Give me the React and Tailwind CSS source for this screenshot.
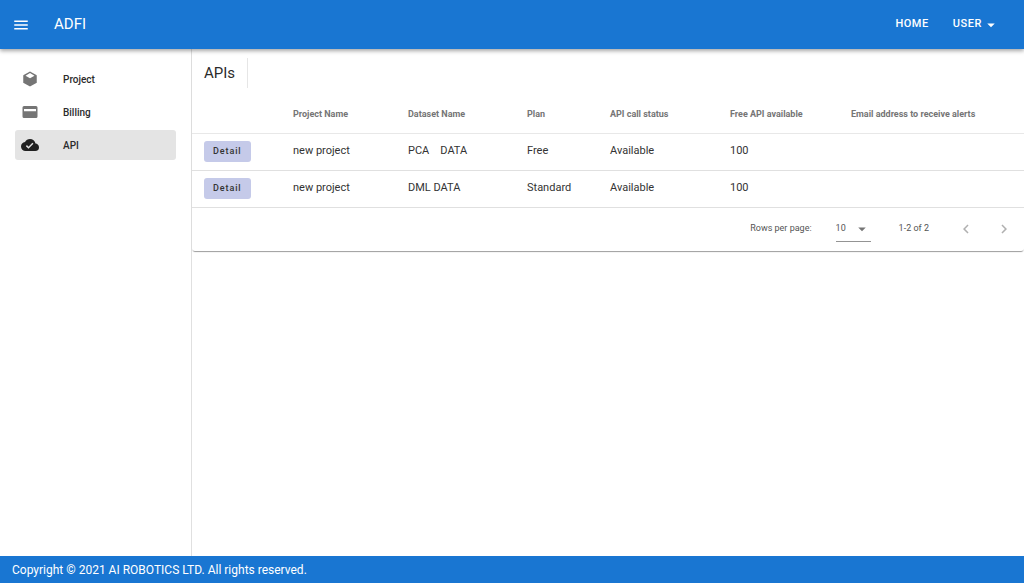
import { useState } from "react";
import clsx from "clsx";

const ICONS = {
   menu: "M3,6H21V8H3V6M3,11H21V13H3V11M3,16H21V18H3V16Z",
   cube: "M21,16.5C21,16.88 20.79,17.21 20.47,17.38L12.57,21.82C12.41,21.94 12.21,22 12,22C11.79,22 11.59,21.94 11.43,21.82L3.53,17.38C3.21,17.21 3,16.88 3,16.5V7.5C3,7.12 3.21,6.79 3.53,6.62L11.43,2.18C11.59,2.06 11.79,2 12,2C12.21,2 12.41,2.06 12.57,2.18L20.47,6.62C20.79,6.79 21,7.12 21,7.5V16.5M12,4.15L6.04,7.5L12,10.85L17.96,7.5L12,4.15Z",
   card: "M4,4H20A2,2 0 0,1 22,6V18A2,2 0 0,1 20,20H4A2,2 0 0,1 2,18V6A2,2 0 0,1 4,4M4,8V11H20V8H4Z",
   cloudCheck: "M10,17L6.5,13.5L7.91,12.08L10,14.17L15.18,9L16.59,10.41M19.35,10.03C18.67,6.59 15.64,4 12,4C9.11,4 6.6,5.64 5.35,8.03C2.34,8.36 0,10.9 0,14A6,6 0 0,0 6,20H19A5,5 0 0,0 24,15C24,12.36 21.95,10.22 19.35,10.03Z",
   menuDown: "M7,10L12,15L17,10H7Z",
   left: "M15.41,16.58L10.83,12L15.41,7.41L14,6L8,12L14,18L15.41,16.58Z",
   right: "M8.59,16.58L13.17,12L8.59,7.41L10,6L16,12L10,18L8.59,16.58Z",
};

const Icon = ({ name, className }) => (
   <svg viewBox="0 0 24 24" fill="currentColor" aria-hidden="true" className={clsx("shrink-0", className)}>
      <path d={ICONS[name]} />
   </svg>
);

const navItems = [
   { label: "Project", icon: "cube" },
   { label: "Billing", icon: "card" },
   { label: "API", icon: "cloudCheck" },
];

const columns = [
   { label: "", width: "w-[89px]" },
   { label: "Project Name", width: "w-[115px]" },
   { label: "Dataset Name", width: "w-[119px]" },
   { label: "Plan", width: "w-[83px]" },
   { label: "API call status", width: "w-[120px]" },
   { label: "Free API available", width: "w-[121px]" },
   { label: "Email address to receive alerts", width: "w-[185px]" },
];

const rows = [
   { project: "new project", dataset: "PCA\u3000DATA", plan: "Free", status: "Available", free: 100, email: "" },
   { project: "new project", dataset: "DML DATA", plan: "Standard", status: "Available", free: 100, email: "" },
];

const Header = () => (
   <header className="relative z-10 flex h-[49px] items-center bg-[#1976d2] pr-4 pl-3 text-white shadow-[0_2px_4px_rgba(0,0,0,0.35)]">
      <button type="button" aria-label="Menu">
         <Icon name="menu" className="size-[18px]" />
      </button>
      <div className="ml-6 text-[15px]">ADFI</div>
      <nav className="ml-auto flex items-center text-[11px] font-medium tracking-wider">
         <a href="#home" className="px-3">HOME</a>
         <button type="button" className="flex items-center pr-2 pl-3 tracking-wider">
            USER
            <Icon name="menuDown" className="size-[18px]" />
         </button>
      </nav>
   </header>
);

const Sidebar = ({ active, onSelect }) => (
   <aside className="w-48 shrink-0 border-r border-[#e0e0e0] px-[15px] pt-[15px]">
      <ul className="flex flex-col gap-[3px]">
         {navItems.map((item) => (
            <li key={item.label}>
               <button
                  type="button"
                  onClick={() => onSelect(item.label)}
                  className={clsx(
                     "flex h-[30px] w-full items-center gap-6 rounded-[3px] px-1.5 text-[10px] font-medium text-[#2b2b2b]",
                     active === item.label && "bg-[#e4e4e4]"
                  )}
               >
                  <Icon
                     name={item.icon}
                     className={clsx("size-[18px]", active === item.label ? "text-[#212121]" : "text-[#757575]")}
                  />
                  {item.label}
               </button>
            </li>
         ))}
      </ul>
   </aside>
);

const ApiTable = () => (
   <table className="w-full table-fixed text-left text-[#333333]">
      <thead>
         <tr className="h-9 border-b border-[#e8e8e8]">
            {columns.map((col) => (
               <th key={col.label} className={clsx("px-3 text-[9px] font-bold whitespace-nowrap text-[#757575]", col.width)}>
                  {col.label}
               </th>
            ))}
         </tr>
      </thead>
      <tbody>
         {rows.map((row) => (
            <tr key={row.dataset} className="h-[37px] border-b border-[#e0e0e0] text-[11px]">
               <td className="px-3">
                  <button
                     type="button"
                     className="block h-[21px] rounded-[3px] bg-[#c5cae9] px-[9px] text-[9px] font-medium tracking-widest"
                  >
                     Detail
                  </button>
               </td>
               <td className="px-3">{row.project}</td>
               <td className="px-3">{row.dataset}</td>
               <td className="px-3">{row.plan}</td>
               <td className="px-3">{row.status}</td>
               <td className="px-3">{row.free}</td>
               <td className="px-3">{row.email}</td>
            </tr>
         ))}
      </tbody>
   </table>
);

const Pagination = () => (
   <div className="flex h-[43px] items-center justify-end pr-[11px] text-[9px] text-[#555555]">
      <label htmlFor="perPage">Rows per page:</label>
      <div className="relative ml-6 flex h-[25px] w-[35px] items-center border-b border-[#949494]">
         <select id="perPage" defaultValue="10" className="w-full appearance-none bg-transparent">
            <option>5</option>
            <option>10</option>
            <option>15</option>
         </select>
         <Icon name="menuDown" className="pointer-events-none absolute right-0 size-[18px] text-[#757575]" />
      </div>
      <span className="ml-7">1-2 of 2</span>
      <button type="button" aria-label="Previous page" className="ml-7 text-[#b0b0b0]">
         <Icon name="left" className="size-[18px]" />
      </button>
      <button type="button" aria-label="Next page" className="ml-5 text-[#b0b0b0]">
         <Icon name="right" className="size-[18px]" />
      </button>
   </div>
);

const App = () => {
   const [active, setActive] = useState("API");

   return (
      <div className="flex min-h-screen flex-col bg-white font-[Roboto,sans-serif]">
         <Header />
         <div className="flex flex-1">
            <Sidebar active={active} onSelect={setActive} />
            <main className="min-w-0 flex-1">
               <section className="rounded-[3px] shadow-[0_2px_1px_-1px_rgba(0,0,0,0.3),0_1px_1px_rgba(0,0,0,0.12)]">
                  <div className="flex h-12 items-center px-3">
                     <h1 className="text-[15px] text-[#2b2b2b]">APIs</h1>
                     <div className="ml-3 h-[30px] w-px bg-[#e6e6e6]" />
                  </div>
                  <ApiTable />
                  <Pagination />
               </section>
            </main>
         </div>
         <footer className="flex h-[27px] items-center bg-[#1976d2] px-3 text-xs text-white">
            Copyright © 2021 AI ROBOTICS LTD. All rights reserved.
         </footer>
      </div>
   );
};

export default App;
